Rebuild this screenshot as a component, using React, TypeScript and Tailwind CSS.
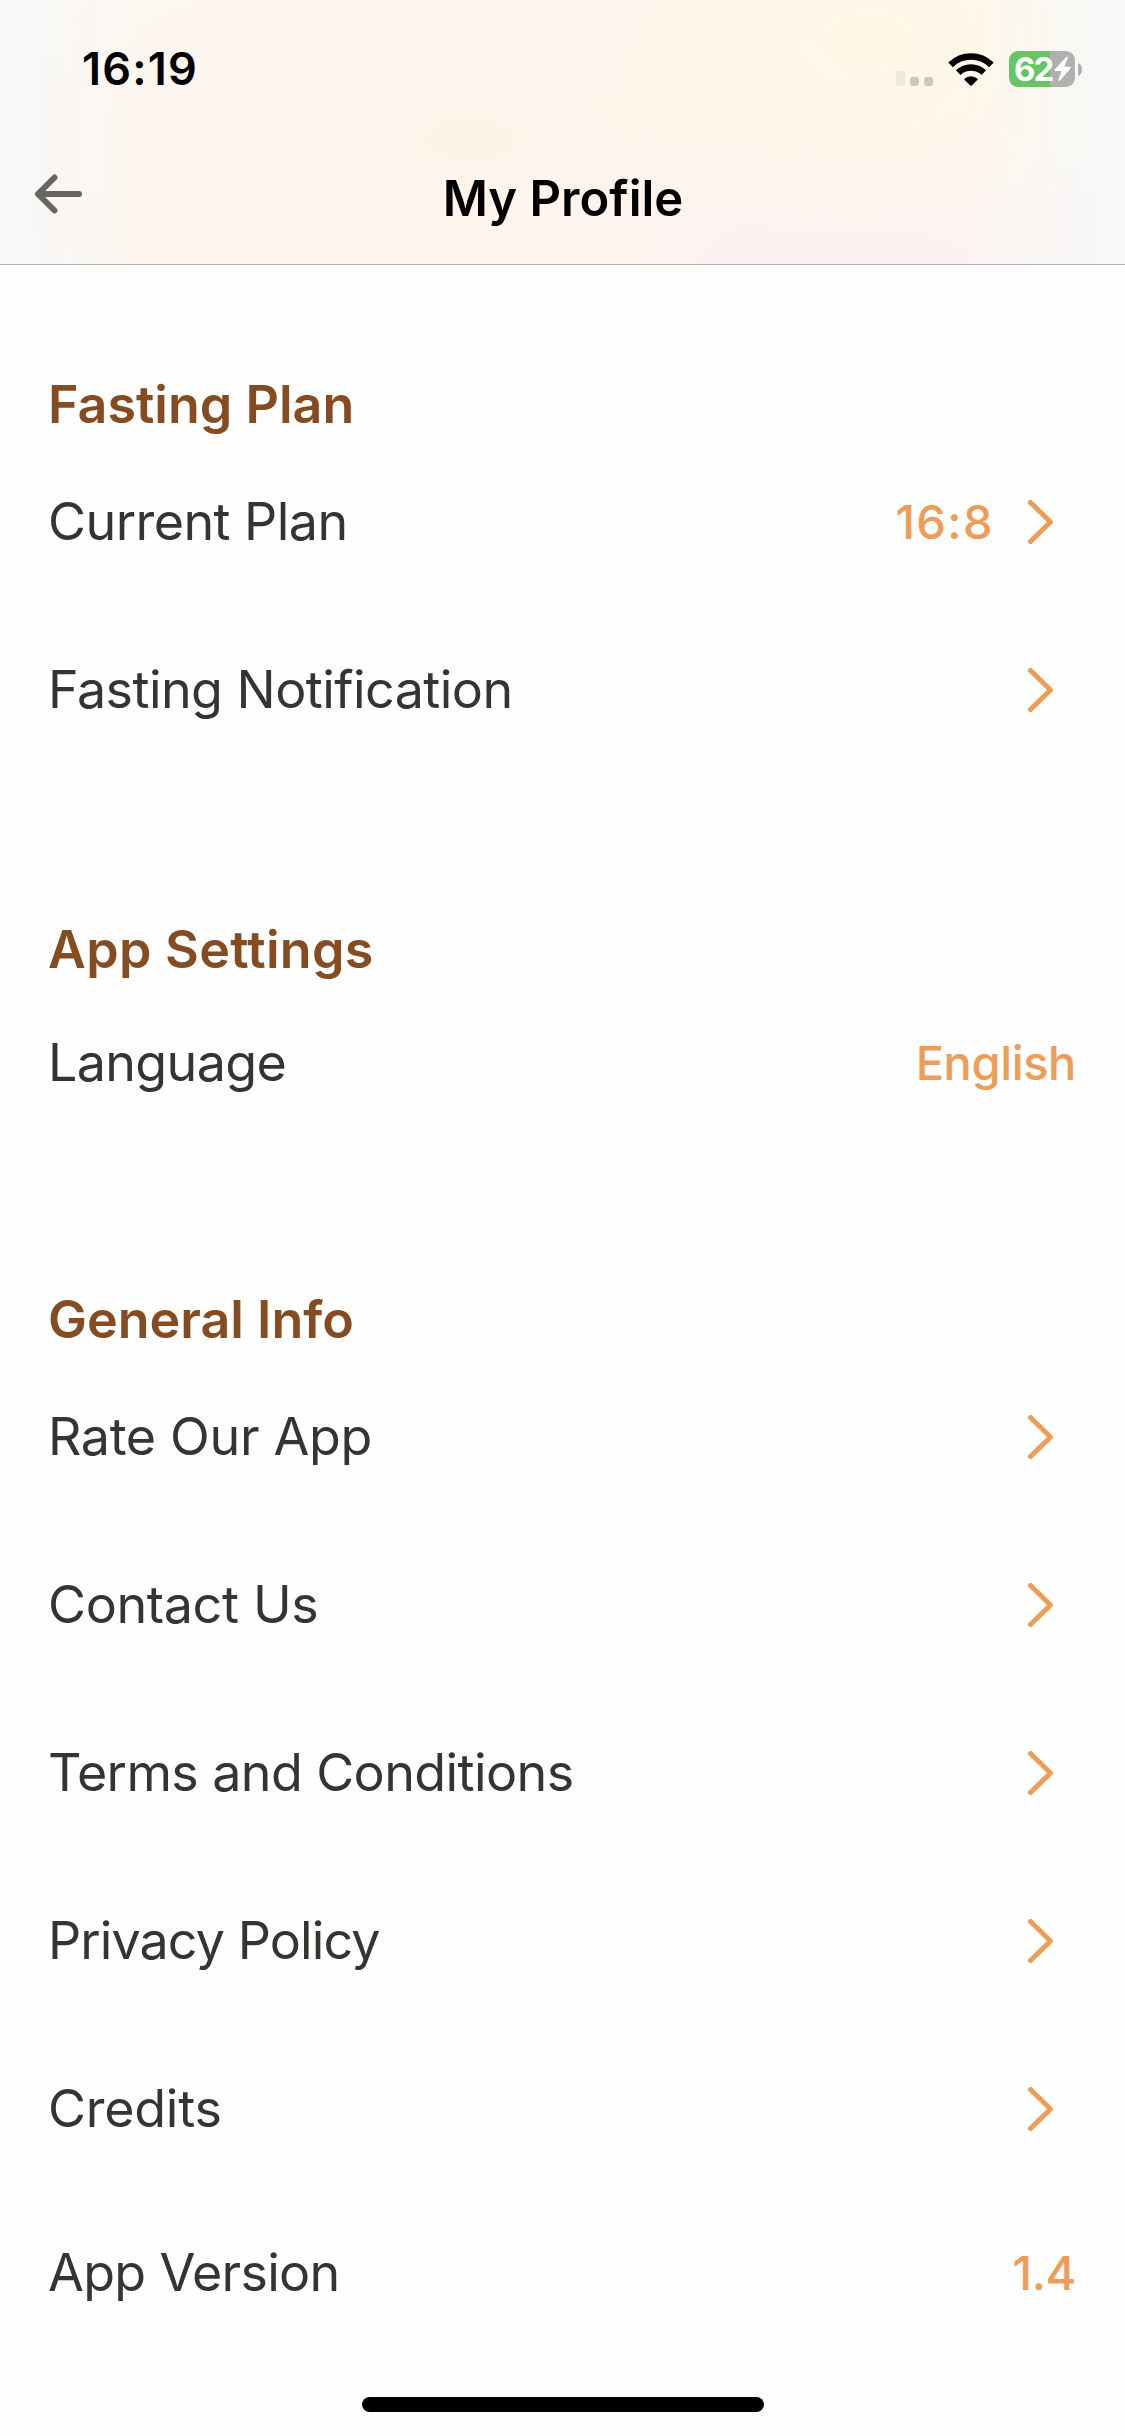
import clsx from 'clsx';

interface ProfileRow {
  label: string;
  value?: string;
  arrow?: boolean;
  tracking: string;
}

interface ProfileSectionProps {
  title: string;
  rows: ProfileRow[];
  className?: string;
  titleClassName?: string;
}

const fastingRows: ProfileRow[] = [
  { label: 'Current Plan', value: '16:8', arrow: true, tracking: 'tracking-[-0.55px]' },
  { label: 'Fasting Notification', arrow: true, tracking: 'tracking-[-0.55px]' },
];

const settingRows: ProfileRow[] = [
  { label: 'Language', value: 'English', tracking: 'tracking-[-0.65px]' },
];

const infoRows: ProfileRow[] = [
  { label: 'Rate Our App', arrow: true, tracking: 'tracking-[-0.35px]' },
  { label: 'Contact Us', arrow: true, tracking: 'tracking-[-0.35px]' },
  { label: 'Terms and Conditions', arrow: true, tracking: 'tracking-[-0.6px]' },
  { label: 'Privacy Policy', arrow: true, tracking: 'tracking-[-0.9px]' },
  { label: 'Credits', arrow: true, tracking: 'tracking-[-0.25px]' },
  { label: 'App Version', value: '1.4', tracking: 'tracking-[-0.7px]' },
];

function SignalIcon() {
  return (
    <div className="flex h-[15px] items-end gap-[5px]">
      <span className="h-[15px] w-[9px] rounded-[3px] bg-[#ebe7da]" />
      <span className="h-[9px] w-[9px] rounded-[3px] bg-[#cdc7bc]" />
      <span className="h-[9px] w-[9px] rounded-[3px] bg-[#cdc7bc]" />
    </div>
  );
}

function WifiIcon() {
  return (
    <svg width="46" height="33" viewBox="0 0 46 33" fill="none">
      <path
        d="M2.6 11.8A29.2 29.2 0 0 1 43.4 11.8"
        stroke="#000"
        strokeWidth="6.6"
      />
      <path
        d="M10.2 19.6A18.6 18.6 0 0 1 35.8 19.6"
        stroke="#000"
        strokeWidth="6.6"
      />
      <path
        d="M23 32.2L16.9 26.3A8.9 8.9 0 0 1 29.1 26.3Z"
        fill="#000"
        stroke="#000"
        strokeWidth="1.2"
        strokeLinejoin="round"
      />
    </svg>
  );
}

function Battery() {
  return (
    <div className="flex items-center gap-[3px]">
      <div className="flex h-9 w-[66px] items-center rounded-[9px] bg-[linear-gradient(90deg,#65c466_41px,#b1b0ae_41px)] pl-[5px]">
        <span className="w-10 text-[33px] font-bold leading-9 tracking-[-2px] text-white">
          62
        </span>
        <svg width="18" height="26" viewBox="0 0 18 26" fill="#fff">
          <path d="M12.4 .8L.8 13.6Q.1 14.9 1.4 15H7.6L4.5 23.8Q4.3 25.6 5.7 24.7L16.8 12.2Q17.5 10.8 16.2 10.7H10.3L13.7 1.8Q13.8 .1 12.4 .8Z" />
        </svg>
      </div>
      <svg width="4" height="13" viewBox="0 0 4 13" fill="#b1b0ae">
        <path d="M0 0Q4 1.6 4 6.5T0 13Z" />
      </svg>
    </div>
  );
}

function StatusBar() {
  return (
    <div className="flex h-[138px] items-center justify-between pl-[82px] pr-[43px]">
      <span className="text-[45px] font-semibold leading-[54px] tracking-[1.2px]">
        16:19
      </span>
      <div className="flex items-center">
        <div className="mr-[15px] mt-[18px]">
          <SignalIcon />
        </div>
        <div className="mr-[15px]">
          <WifiIcon />
        </div>
        <Battery />
      </div>
    </div>
  );
}

function Chevron() {
  return (
    <svg
      className="ml-[34px] mr-[22px]"
      width="26"
      height="48"
      viewBox="0 0 26 48"
      fill="none"
      stroke="#ee9d58"
      strokeWidth="5"
      strokeLinecap="round"
      strokeLinejoin="round"
    >
      <path d="M2.5 4.5L22.5 24L2.5 43.5" />
    </svg>
  );
}

function ProfileSection({ title, rows, className, titleClassName }: ProfileSectionProps) {
  return (
    <section className={className}>
      <h2
        className={clsx(
          'h-[66px] text-[52px] font-semibold leading-[66px] text-[#844c20]',
          titleClassName,
        )}
      >
        {title}
      </h2>
      <ul>
        {rows.map((row) => (
          <li
            key={row.label}
            className={clsx(
              'flex items-center justify-between',
              row.arrow ? 'h-[168px]' : 'h-40',
            )}
          >
            <span className={clsx('text-[52px] text-[#343431]', row.tracking)}>
              {row.label}
            </span>
            <div className="flex items-center text-[47px] font-medium text-[#ee9d58]">
              {row.value && (
                <span className={row.arrow ? 'tracking-[1.4px]' : 'tracking-[-0.38px]'}>
                  {row.value}
                </span>
              )}
              {row.arrow && <Chevron />}
            </div>
          </li>
        ))}
      </ul>
    </section>
  );
}

export default function App() {
  return (
    <div className="flex h-[2436px] w-[1125px] flex-col bg-[#fefefe] font-['Inter',sans-serif]">
      <header className="h-[265px] border-b border-[#b3b1b0] bg-[linear-gradient(90deg,#f8f8f6_1%,rgba(248,248,246,0)_13%,rgba(248,248,246,0)_86%,#f8f8f6_99%),radial-gradient(ellipse_320px_210px_at_870px_40px,#fff7e5,rgba(255,247,229,0)),radial-gradient(ellipse_360px_150px_at_860px_275px,#faf2f2,rgba(250,242,242,0)),radial-gradient(ellipse_560px_260px_at_470px_140px,#fef3e9,rgba(254,243,233,0)),linear-gradient(#fcf8f3,#fcf6f2)] text-black">
        <StatusBar />
        <div className="grid h-[121px] grid-cols-[1fr_auto_1fr] items-center pl-[34px]">
          <button aria-label="Back" className="-mt-2.5 w-[50px]">
            <svg
              width="50"
              height="42"
              viewBox="0 0 50 42"
              fill="none"
              stroke="#676561"
              strokeWidth="6"
              strokeLinecap="round"
              strokeLinejoin="round"
            >
              <path d="M45 21H4M20.5 4.5L4 21L20.5 37.5" />
            </svg>
          </button>
          <h1 className="mr-[33px] text-[49px] font-semibold leading-[60px]">My Profile</h1>
        </div>
      </header>

      <main className="pl-12 pr-[49px]">
        <ProfileSection title="Fasting Plan" rows={fastingRows} className="pt-[107px]" />
        <ProfileSection
          title="App Settings"
          rows={settingRows}
          className="pt-[143px]"
          titleClassName="tracking-[0.3px]"
        />
        <ProfileSection title="General Info" rows={infoRows} className="pt-36" />
      </main>

      <div className="mx-auto mb-6 mt-auto h-[15px] w-[402px] rounded-full bg-black" />
    </div>
  );
}
